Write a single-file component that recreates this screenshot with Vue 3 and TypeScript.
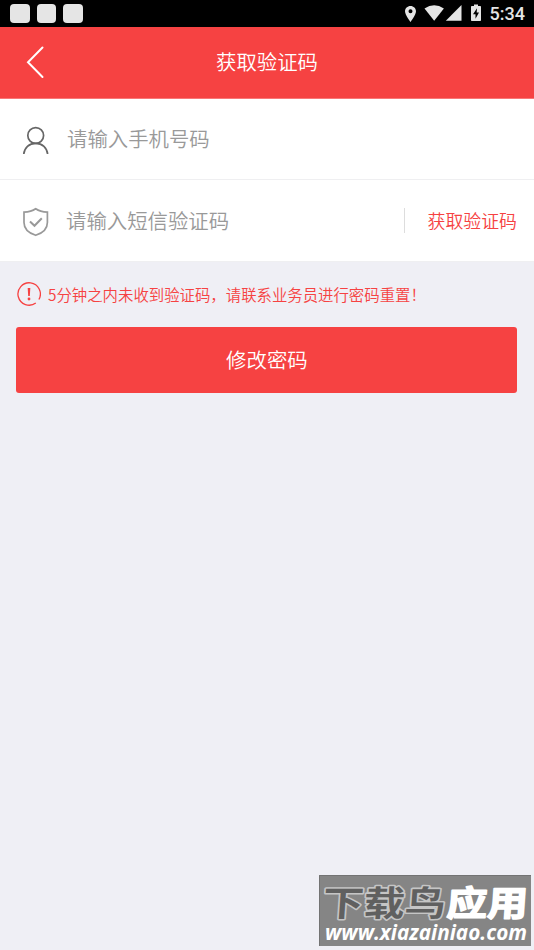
<script setup lang="ts">
import { ref } from 'vue'

const phone = ref<string>('')
const code = ref<string>('')
const notifications: number[] = [1, 2, 3]
</script>

<template>
  <main class="screen">
    <div class="status">
      <div class="notifications">
        <span v-for="n in notifications" :key="n" class="notification"></span>
      </div>
      <svg class="status-icons" width="59" height="27" viewBox="0 0 59 27" fill="#e5e5e5">
        <path fill-rule="evenodd" d="M5.500 6C2.400 6 0 8.300 0 11.300C0 15.200 5.500 22 5.500 22S11 15.200 11 11.300C11 8.300 8.600 6 5.500 6ZM5.500 9.300A2 2 0 1 1 5.500 13.300A2 2 0 0 1 5.500 9.300Z" />
        <path d="M19.500 8.600Q29.200 1.800 38.900 8.600L29.200 20.700Z" />
        <path d="M56.500 5V20.800H40.800Z" />
      </svg>
      <svg class="battery" width="12" height="27" viewBox="0 0 12 27">
        <path fill="#e5e5e5" d="M4 4.500H8V6H10.200Q11 6 11 6.800V20.200Q11 21 10.200 21H1.800Q1 21 1 20.200V6.800Q1 6 1.800 6H4Z" />
        <path fill="#000" d="M7 8.200L3 14.200H5.500V18.700L9 12.500H6.700Z" />
      </svg>
      <time class="clock">5:34</time>
    </div>

    <header class="header">
      <button class="back" aria-label="返回">
        <svg width="20" height="34" viewBox="0 0 20 34" fill="none" stroke="#fff" stroke-width="2">
          <path d="M17.500 2.500L3 17.300L17.500 32" stroke-linecap="round" />
        </svg>
      </button>
      <h1 class="title">获取验证码</h1>
    </header>

    <section class="form">
      <label class="row">
        <svg class="row-icon" width="28" height="30" viewBox="0 0 28 30" fill="none" stroke="#666" stroke-width="1.700">
          <circle cx="13.700" cy="9.500" r="7.900" />
          <path d="M1.800 28C2.400 21.800 7 17.300 13.700 17.300S25 21.800 25.600 28" />
        </svg>
        <input v-model="phone" class="field" type="tel" placeholder="请输入手机号码" />
      </label>
      <div class="row second">
        <svg class="row-icon" width="28" height="30" viewBox="0 0 28 30" fill="none" stroke="#999" stroke-width="1.700">
          <path d="M13.700 1.800C10.700 4 6.800 5.100 2 5.200V15.500C2 21.600 6.500 26 13.700 28.300C20.900 26 25.400 21.600 25.400 15.500V5.200C20.600 5.100 16.700 4 13.700 1.800Z" />
          <path d="M8 14.500L12.500 18.800L19.800 11.300" stroke-width="2" />
        </svg>
        <input v-model="code" class="field" type="text" placeholder="请输入短信验证码" />
        <button class="get-code">获取验证码</button>
      </div>
    </section>

    <p class="notice">
      <svg class="notice-icon" width="24" height="24" viewBox="0 0 24 24" fill="none" stroke="#f64242">
        <path d="M18.800 21A11.200 11.200 0 1 1 21.900 17.500" stroke-width="1.300" />
        <path d="M10.700 6H13.300L12.800 14H11.200Z" fill="#f64242" stroke="none" />
        <circle cx="12" cy="17" r="1.400" fill="#f64242" stroke="none" />
      </svg>
      <span>5分钟之内未收到验证码，请联系业务员进行密码重置！</span>
    </p>

    <button class="submit">修改密码</button>

    <svg class="watermark" width="212" height="71" viewBox="0 0 212 71">
      <rect width="212" height="71" fill="#858585" />
      <path d="M0.500 71V0.500H212" fill="none" stroke="#737373" />
      <g class="brand" transform="translate(3 41) skewX(-4)">
        <text class="brand-dark" x="0" y="0" textLength="123" lengthAdjust="spacingAndGlyphs">下载鸟</text>
        <text class="brand-light" x="124" y="0" textLength="81" lengthAdjust="spacingAndGlyphs">应用</text>
      </g>
      <text class="address" x="6" y="65" textLength="202" lengthAdjust="spacingAndGlyphs">www.xiazainiao.com</text>
    </svg>
  </main>
</template>

<style>
body {
  margin: 0;
  background: #efeff5;
}
</style>

<style scoped>
.screen {
  position: relative;
  box-sizing: border-box;
  width: 100%;
  height: 950px;
  overflow: hidden;
  background: #efeff5;
  font-family: "Noto Sans CJK SC DemiLight", "Noto Sans CJK SC", sans-serif;
  font-weight: 350;
}
button {
  padding: 0;
  border: 0;
  background: none;
  font-family: inherit;
  font-weight: inherit;
}
svg {
  display: block;
  flex: none;
}
.status {
  display: flex;
  align-items: center;
  height: 27px;
  padding: 0 9px 0 10px;
  background: #000;
}
.notifications {
  display: flex;
  flex: 1;
  gap: 7px;
}
.notification {
  width: 19.700px;
  height: 19.500px;
  border-radius: 4px;
  background: #e5e5e5;
}
.status-icons {
  margin-right: 6px;
}
.battery {
  margin-right: 8px;
}
.clock {
  color: #e5e5e5;
  font: 500 18px/27px Roboto, sans-serif;
}
.header {
  display: grid;
  grid-template-columns: 60px 1fr 60px;
  align-items: center;
  box-sizing: border-box;
  height: 72px;
  padding-bottom: 1px;
  background: #f64242;
  border-bottom: 1px solid #f97777;
}
.back {
  padding-left: 25px;
}
.title {
  margin: 0;
  padding-bottom: 2px;
  color: #fff;
  font-size: 20.400px;
  font-weight: 350;
  line-height: 30px;
  text-align: center;
}
.form {
  background: #fff;
}
.row {
  display: flex;
  align-items: center;
  box-sizing: border-box;
  height: 81px;
  padding: 0 17px 0 22px;
  border-bottom: 1px solid #efeff1;
}
.second {
  height: 82px;
}
.row-icon {
  margin-top: 3px;
  margin-right: 17px;
}
.second .row-icon {
  margin-right: 16px;
}
.field {
  flex: 1;
  min-width: 0;
  height: 32px;
  padding: 0 0 2px;
  border: 0;
  outline: 0;
  background: transparent;
  color: #333;
  font-family: inherit;
  font-size: 20.400px;
  font-weight: inherit;
}
.second .field {
  padding-bottom: 1px;
}
.field::placeholder {
  color: #999;
  opacity: 1;
}
.get-code {
  height: 25px;
  padding-left: 23px;
  border-left: 1px solid #ddd;
  color: #f64242;
  font-size: 17.900px;
  line-height: 25px;
}
.notice {
  display: flex;
  align-items: center;
  gap: 7px;
  height: 24px;
  margin: 20px 17px 21px;
  color: #f64242;
  font-size: 15.400px;
  line-height: 24px;
  white-space: nowrap;
}
.submit {
  display: block;
  width: calc(100% - 33px);
  height: 66px;
  margin: 0 16.400px;
  padding-bottom: 3px;
  border-radius: 3px;
  background: #f64242;
  color: #fff;
  font-size: 20.400px;
}
.watermark {
  position: absolute;
  right: 3px;
  bottom: 4px;
}
.brand {
  font-family: "Noto Sans CJK SC", sans-serif;
  font-size: 35px;
  font-weight: 700;
  paint-order: stroke;
  stroke-linejoin: round;
}
.brand-dark {
  fill: #606060;
  stroke: #c5c5c5;
  stroke-width: 3px;
}
.brand-light {
  fill: #fff;
  stroke: #fff;
  stroke-width: 1.500px;
}
.address {
  fill: #fff;
  font: italic 700 21px "Open Sans", sans-serif;
}
</style>
